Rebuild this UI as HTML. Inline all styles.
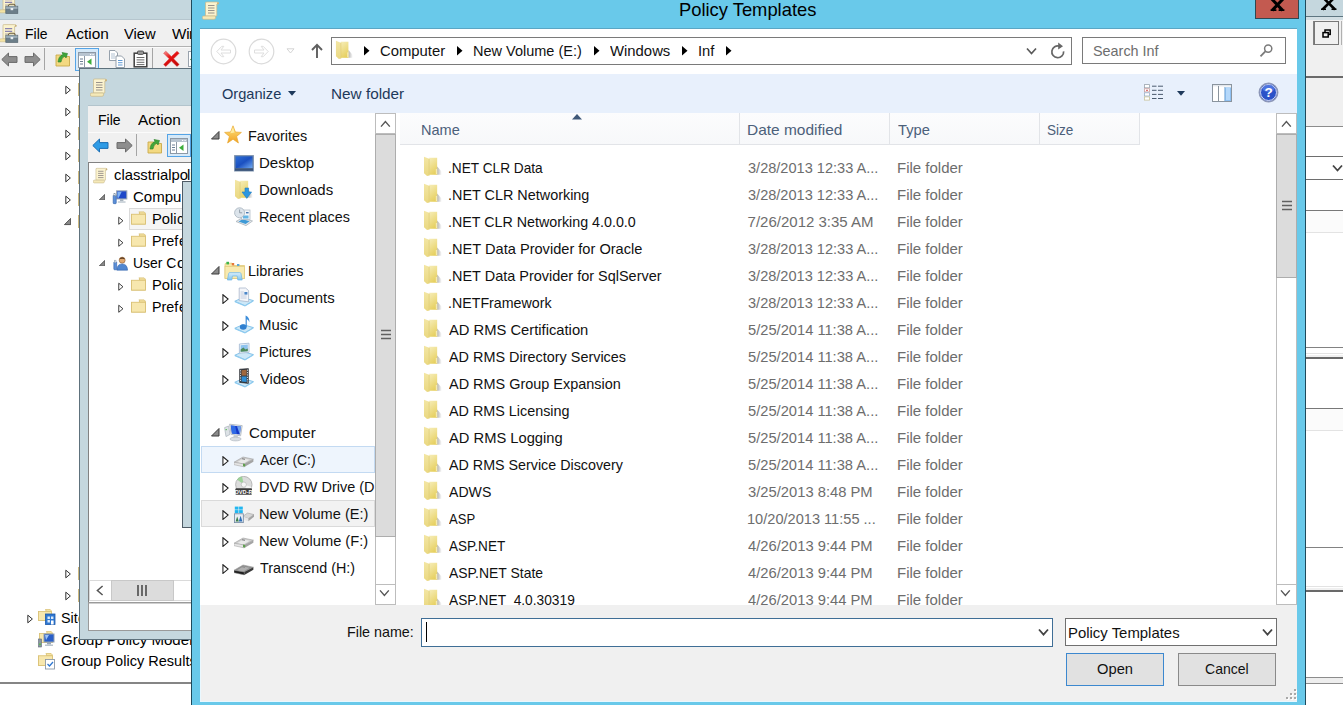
<!DOCTYPE html>
<html><head><meta charset="utf-8"><title>Policy Templates</title>
<style>
html,body{margin:0;padding:0;}
body{width:1343px;height:705px;overflow:hidden;background:#fff;position:relative;font-family:"Liberation Sans",sans-serif;font-size:15px;}
.layer{position:absolute;overflow:hidden;}
.a{position:absolute;display:block;}
.t{position:absolute;white-space:pre;line-height:20px;height:20px;transform-origin:0 0;}
</style></head><body>
<svg width="0" height="0" style="position:absolute">
<defs>
<linearGradient id="gFold" x1="0.2" y1="0" x2="0.6" y2="1"><stop offset="0" stop-color="#F5EBB2"/><stop offset="1" stop-color="#E6CF5E"/></linearGradient><linearGradient id="gShadow" x1="0" y1="0" x2="1" y2="0"><stop offset="0" stop-color="#000" stop-opacity="0.3"/><stop offset="1" stop-color="#000" stop-opacity="0"/></linearGradient>
<linearGradient id="gFold2" x1="0" y1="0" x2="0" y2="1"><stop offset="0" stop-color="#F3E6A4"/><stop offset="1" stop-color="#EAD881"/></linearGradient>
<linearGradient id="gBlue" x1="0" y1="0" x2="1" y2="1"><stop offset="0" stop-color="#2F6FD6"/><stop offset="0.5" stop-color="#1B50C0"/><stop offset="1" stop-color="#6FA8F0"/></linearGradient>
<linearGradient id="gStar" x1="0" y1="0" x2="0" y2="1"><stop offset="0" stop-color="#FFE680"/><stop offset="1" stop-color="#F0A020"/></linearGradient>
<linearGradient id="gLib" x1="0" y1="0" x2="0" y2="1"><stop offset="0" stop-color="#D8EEFB"/><stop offset="1" stop-color="#7FC4EE"/></linearGradient>
<linearGradient id="gDrv" x1="0" y1="0" x2="0" y2="1"><stop offset="0" stop-color="#F4F4F4"/><stop offset="1" stop-color="#A9A9A9"/></linearGradient>
<symbol id="folder" viewBox="0 0 20 22">
 <path d="M14.9 11 L19.8 16.5 L19.8 19.6 L14.9 19.7 Z" fill="url(#gShadow)"/>
 <path d="M6.5 1.8 L14.9 1.8 L14.9 19.7 L6.5 19.7 Z" fill="url(#gFold)"/>
 <rect x="13.5" y="13.6" width="1.4" height="5.4" fill="#F5EAB2"/>
 <path d="M1.05 0.75 L6.5 2.95 L6.5 20.5 L4.3 21 L1.05 18 Z" fill="url(#gFold2)"/>
 <path d="M6.5 2.95 L6.5 20.5" stroke="#DDC868" stroke-width="0.7"/>
</symbol>
<symbol id="tri" viewBox="0 0 8 11"><path d="M1 0.8 L6.6 5.5 L1 10.2 Z" fill="#fff" stroke="#222" stroke-width="1.15"/></symbol>
<symbol id="triX" viewBox="0 0 9 9"><path d="M8 0.5 L8 8 L0.5 8 Z" fill="#8A8A8A" stroke="#3C3C3C" stroke-width="1"/></symbol>
<symbol id="scroll" viewBox="0 0 19 19">
 <path d="M3.5 2 Q3 1 5 1 L15 1 Q17 1 16.5 3 L14.8 3.2 L14.8 15 L3.5 15 Z" fill="#FBF3CF" stroke="#C9B98A" stroke-width="0.7"/>
 <path d="M14.8 3.2 L16.8 3 Q17.4 1.4 15.6 1" fill="#C8B079"/>
 <path d="M6 4.5h6.5M6 7h6.5M6 9.5h6.5M6 12h6.5" stroke="#9A938C" stroke-width="1.1"/>
 <path d="M1 15 L12.5 15 Q14 15 13.6 17 Q13.4 18.3 12 18.3 L1.6 18.3 Q0.2 18.3 0.4 16.6 Q0.5 15.2 1 15Z" fill="#F5E9B8" stroke="#C9B98A" stroke-width="0.7"/>
</symbol>
<symbol id="sfolder" viewBox="0 0 16 14">
 <path d="M0.5 3 L0.5 13.5 L15.5 13.5 L15.5 3 L9 3 L9 1 Q9 0.5 8.4 0.5 L9 0.5 L14 0.5 L15 1.5 L15.5 3" fill="#F5E3A3" stroke="#D9C074" stroke-width="0.9"/>
 <rect x="0.5" y="3" width="15" height="10.5" fill="#F7E7AE" stroke="#D9C074" stroke-width="0.9"/>
</symbol>
</defs></svg>
<div class="layer" id="main" style="left:0;top:0;width:1343px;height:705px;"><div class="a" style="left:0px;top:0px;width:1343px;height:705px;background:#fff;"></div>
<div class="a" style="left:0px;top:0px;width:1343px;height:19px;background:#C5D7DE;"></div>
<div class="a" style="left:0px;top:19px;width:1343px;height:1px;background:#B6C6CE;"></div>
<div class="a" style="left:0px;top:20px;width:1343px;height:57px;background:#F0F0F0;"></div>
<div class="a" style="left:0px;top:46px;width:200px;height:1px;background:#B2B2B2;"></div>
<div class="a" style="left:0px;top:47px;width:200px;height:1px;background:#FBFBFB;"></div>
<div class="a" style="left:0px;top:76px;width:1343px;height:1px;background:#8E8E8E;"></div>
<div class="a" style="left:1306px;top:16px;width:37px;height:1px;background:#5E7681;"></div>
<div class="a" style="left:1306px;top:17px;width:37px;height:3px;background:#D3DFE4;"></div>
<div class="a" style="left:1306px;top:76px;width:37px;height:2px;background:#6A6A6A;"></div>
<div class="a" style="left:1306px;top:78px;width:37px;height:48px;background:#F0F0F0;"></div>
<div class="a" style="left:1306px;top:126px;width:37px;height:1px;background:#8C8C8C;"></div>
<div class="a" style="left:1306px;top:156px;width:37px;height:1px;background:#6E6E6E;"></div>
<div class="a" style="left:1306px;top:179px;width:37px;height:1px;background:#6E6E6E;"></div>
<div class="a" style="left:1306px;top:210px;width:37px;height:1px;background:#787878;"></div>
<div class="a" style="left:1306px;top:232px;width:37px;height:1px;background:#E3E3E3;"></div>
<div class="a" style="left:1306px;top:347px;width:37px;height:1px;background:#828282;"></div>
<div class="a" style="left:1306px;top:353px;width:37px;height:1px;background:#E3E3E3;"></div>
<div class="a" style="left:1306px;top:408px;width:37px;height:1px;background:#787878;"></div>
<div class="a" style="left:1306px;top:430px;width:37px;height:1px;background:#E3E3E3;"></div>
<div class="a" style="left:1306px;top:547px;width:37px;height:1px;background:#828282;"></div>
<div class="a" style="left:1306px;top:586px;width:37px;height:1px;background:#E3E3E3;"></div>
<div class="a" style="left:1306px;top:677px;width:37px;height:1px;background:#8C8C8C;"></div>
<div class="a" style="left:1306px;top:683px;width:37px;height:1px;background:#8C8C8C;"></div>
<div class="a" style="left:1306px;top:211px;width:37px;height:21px;background:#FBFBFB;"></div>
<div class="a" style="left:1306px;top:409px;width:37px;height:21px;background:#FBFBFB;"></div>
<div class="a" style="left:1306px;top:355px;width:37px;height:2px;background:#F0F0F0;"></div>
<div class="a" style="left:1306px;top:357px;width:37px;height:2px;background:#696969;"></div>
<div class="a" style="left:1306px;top:588px;width:37px;height:2px;background:#F0F0F0;"></div>
<div class="a" style="left:1306px;top:590px;width:37px;height:2px;background:#696969;"></div>
<div class="a" style="left:1306px;top:678px;width:37px;height:5px;background:#EEEEEE;"></div>
<svg class="a" style="left:1320px;top:0px;" width="18" height="11" viewBox="0 0 18 11"><path d="M2.5 -3 L15 9.5 M15 -3 L2.5 9.5" stroke="#000" stroke-width="2.6"/><path d="M1 9.3h5M11.5 9.3h5" stroke="#000" stroke-width="1.6"/></svg>
<div class="a" style="left:1306px;top:21px;width:8px;height:24px;background:#F0F0F0;border:none;box-sizing:border-box;border-right:1px solid #808080;"></div>
<div class="a" style="left:1314px;top:21px;width:25px;height:24px;background:#F0F0F0;border:1px solid #777;box-sizing:border-box;"></div>
<svg class="a" style="left:1321.5px;top:28.5px;" width="9" height="9" viewBox="0 0 9 9"><rect x="3" y="1" width="5.2" height="4.4" fill="none" stroke="#000" stroke-width="1.5"/><rect x="1" y="3.6" width="5.2" height="4.4" fill="#F0F0F0" stroke="#000" stroke-width="1.5"/></svg>
<div class="a" style="left:1341px;top:21px;width:2px;height:24px;background:#F0F0F0;border:none;box-sizing:border-box;border-left:1px solid #B0B0B0;"></div>
<svg class="a" style="left:1332px;top:164px;" width="11" height="9" viewBox="0 0 11 9"><path d="M1 1.5 L5.5 6.5 L10 1.5" fill="none" stroke="#444" stroke-width="1.8"/></svg>
<div class="a" style="left:0px;top:682px;width:191px;height:2px;background:#858585;"></div>
<svg class="a" style="left:0px;top:-5px;" width="19" height="20" viewBox="0 0 19 20"><path d="M3 1.5 Q2.6 0.6 4.2 0.6 L14.6 0.6 Q16.6 0.6 16 2.4 L14.6 2.6 L14.6 15 L3 15Z" fill="#FBF3CF" stroke="#C9B98A" stroke-width="0.7"/><path d="M14.6 2.6 L16.6 2.4 Q17.2 1 15.4 0.6" fill="#C8B079"/><path d="M5 4.6h7.2M5 7.4h7.2" stroke="#8A84B0" stroke-width="1.4"/><path d="M5 10h3" stroke="#B0A8A0" stroke-width="1"/><rect x="-0.5" y="14.8" width="6.8" height="3" rx="1.2" fill="#F3E3A3" stroke="#C9B98A" stroke-width="0.6"/><rect x="5.8" y="11.2" width="12" height="7.2" fill="#6C7E89" stroke="#55656F" stroke-width="0.7"/><rect x="6.1" y="11.5" width="11.4" height="2.4" fill="#9CADB8"/><rect x="10.6" y="13" width="2.6" height="2.2" fill="#E8EEF2"/><path d="M8.4 11.2 Q8.4 9.2 10 9.2 L13.6 9.2 Q15.2 9.2 15.2 11.2" fill="none" stroke="#6A5A3A" stroke-width="1.1"/></svg>
<svg class="a" style="left:0px;top:24px;" width="19" height="20" viewBox="0 0 19 20"><path d="M3 1.5 Q2.6 0.6 4.2 0.6 L14.6 0.6 Q16.6 0.6 16 2.4 L14.6 2.6 L14.6 15 L3 15Z" fill="#FBF3CF" stroke="#C9B98A" stroke-width="0.7"/><path d="M14.6 2.6 L16.6 2.4 Q17.2 1 15.4 0.6" fill="#C8B079"/><path d="M5 4.6h7.2M5 7.4h7.2" stroke="#8A84B0" stroke-width="1.4"/><path d="M5 10h3" stroke="#B0A8A0" stroke-width="1"/><rect x="-0.5" y="14.8" width="6.8" height="3" rx="1.2" fill="#F3E3A3" stroke="#C9B98A" stroke-width="0.6"/><rect x="5.8" y="11.2" width="12" height="7.2" fill="#6C7E89" stroke="#55656F" stroke-width="0.7"/><rect x="6.1" y="11.5" width="11.4" height="2.4" fill="#9CADB8"/><rect x="10.6" y="13" width="2.6" height="2.2" fill="#E8EEF2"/><path d="M8.4 11.2 Q8.4 9.2 10 9.2 L13.6 9.2 Q15.2 9.2 15.2 11.2" fill="none" stroke="#6A5A3A" stroke-width="1.1"/></svg>
<svg class="a" style="left:1px;top:52px;" width="17" height="15" viewBox="0 0 17 15"><path d="M0.8 7.5 L7.5 1 L7.5 4.6 L16 4.6 L16 10.4 L7.5 10.4 L7.5 14 Z" fill="#8E8E8E" stroke="#6B6B6B" stroke-width="1"/></svg>
<svg class="a" style="left:24px;top:52px;" width="17" height="15" viewBox="0 0 17 15"><path d="M16.2 7.5 L9.5 1 L9.5 4.6 L1 4.6 L1 10.4 L9.5 10.4 L9.5 14 Z" fill="#8E8E8E" stroke="#6B6B6B" stroke-width="1"/></svg>
<div class="a" style="left:44px;top:48px;width:1px;height:22px;background:#A5A5A5;"></div>
<svg class="a" style="left:55px;top:51px;" width="16" height="16" viewBox="0 0 16 16"><path d="M1 5.5 L1 15 L14.5 15 L14.5 5.5 L8 5.5 L6.5 4 L1 4 Z" fill="#F3D981" stroke="#C9A94A" stroke-width="0.9"/><path d="M3 11 Q3.5 5 8 3.5 L7 1.5 L12.5 2.5 L11 7 L9.8 5.2 Q6.5 6.5 6 11 Z" fill="#3FA53A" stroke="#2B7F28" stroke-width="0.6"/></svg>
<div class="a" style="left:75px;top:48px;width:24px;height:23px;background:#D6E9F8;border:1px solid #55A4E6;box-sizing:border-box;"></div>
<svg class="a" style="left:78px;top:52px;" width="18" height="16" viewBox="0 0 18 16"><rect x="0.5" y="0.5" width="17" height="15" fill="#fff" stroke="#8D99A6"/><rect x="1" y="1" width="16" height="3" fill="#B8C4D0"/><path d="M12 2.5h1.2M14.5 2.5h1.2" stroke="#fff" stroke-width="1.2"/><path d="M6.5 4v11.5" stroke="#8D99A6"/><path d="M2 7h3M2 9.5h3M2 12h3" stroke="#6C7F94" stroke-width="1.1"/><path d="M13.5 6.5 L13.5 13 L9 9.75 Z" fill="#3DAE3B"/></svg>
<svg class="a" style="left:108px;top:50px;" width="18" height="18" viewBox="0 0 18 18"><path d="M1.5 0.5 L7 0.5 L9.5 3 L9.5 10.5 L1.5 10.5 Z" fill="#fff" stroke="#8A96A3" stroke-width="0.9"/><path d="M3 4h4M3 6h4M3 8h4" stroke="#9FB2C6" stroke-width="0.8"/><path d="M8 6 L13.5 6 L16.5 9 L16.5 17.5 L8 17.5 Z" fill="#fff" stroke="#8A96A3" stroke-width="0.9"/><path d="M10 10.5h4.5M10 12.7h4.5M10 15h4.5" stroke="#4F8FD0" stroke-width="0.9"/></svg>
<svg class="a" style="left:133px;top:50px;" width="15" height="18" viewBox="0 0 15 18"><rect x="1.2" y="3.2" width="12.6" height="13.6" fill="#fff" stroke="#3E3E3E" stroke-width="1.5"/><rect x="4.5" y="1" width="6" height="3.4" rx="1" fill="#9A9A9A" stroke="#3A3A3A" stroke-width="0.8"/><path d="M3.6 7.5h7.8M3.6 9.9h7.8M3.6 12.3h7.8M3.6 14.6h7.8" stroke="#6A6A6A" stroke-width="1"/></svg>
<div class="a" style="left:152px;top:48px;width:1px;height:22px;background:#A5A5A5;"></div>
<svg class="a" style="left:162px;top:50px;" width="19" height="18" viewBox="0 0 19 18"><defs><linearGradient id="gX" x1="0" y1="0" x2="0.6" y2="1"><stop offset="0" stop-color="#F59A9A"/><stop offset="0.45" stop-color="#E81414"/><stop offset="1" stop-color="#C40808"/></linearGradient></defs><path d="M1.6 3.2 L3.8 1.2 L9.4 6.6 L15 1.2 L17.2 3.2 L11.6 8.8 L17.2 14.4 L15 16.4 L9.4 11 L3.8 16.4 L1.6 14.4 L7.2 8.8 Z" fill="url(#gX)" stroke="#D84040" stroke-width="0.5"/></svg>
<svg class="a" style="left:188px;top:51px;" width="8" height="16" viewBox="0 0 8 16"><rect x="0.5" y="0.5" width="10" height="15" fill="#fff" stroke="#9AA3AD"/><path d="M2 8.5 l3 2.5 l0 -5z" fill="#2E8B34"/></svg>
<svg class="a" style="left:64.5px;top:85px;" width="6.5" height="10" viewBox="0 0 6.5 10"><use href="#tri" width="6.5" height="10"/></svg>
<div class="a" style="left:77.5px;top:83px;width:2px;height:13px;background:#CDB87E;"></div>
<svg class="a" style="left:64.5px;top:107px;" width="6.5" height="10" viewBox="0 0 6.5 10"><use href="#tri" width="6.5" height="10"/></svg>
<div class="a" style="left:77.5px;top:105px;width:2px;height:13px;background:#CDB87E;"></div>
<svg class="a" style="left:64.5px;top:129px;" width="6.5" height="10" viewBox="0 0 6.5 10"><use href="#tri" width="6.5" height="10"/></svg>
<div class="a" style="left:77.5px;top:127px;width:2px;height:13px;background:#CDB87E;"></div>
<svg class="a" style="left:64.5px;top:151px;" width="6.5" height="10" viewBox="0 0 6.5 10"><use href="#tri" width="6.5" height="10"/></svg>
<div class="a" style="left:77.5px;top:149px;width:2px;height:13px;background:#CDB87E;"></div>
<svg class="a" style="left:64.5px;top:173px;" width="6.5" height="10" viewBox="0 0 6.5 10"><use href="#tri" width="6.5" height="10"/></svg>
<div class="a" style="left:77.5px;top:171px;width:2px;height:13px;background:#CDB87E;"></div>
<svg class="a" style="left:64.5px;top:195px;" width="6.5" height="10" viewBox="0 0 6.5 10"><use href="#tri" width="6.5" height="10"/></svg>
<div class="a" style="left:77.5px;top:193px;width:2px;height:13px;background:#CDB87E;"></div>
<svg class="a" style="left:64.5px;top:569px;" width="6.5" height="10" viewBox="0 0 6.5 10"><use href="#tri" width="6.5" height="10"/></svg>
<div class="a" style="left:77.5px;top:567px;width:2px;height:13px;background:#CDB87E;"></div>
<svg class="a" style="left:64.5px;top:591px;" width="6.5" height="10" viewBox="0 0 6.5 10"><use href="#tri" width="6.5" height="10"/></svg>
<div class="a" style="left:77.5px;top:589px;width:2px;height:13px;background:#CDB87E;"></div>
<svg class="a" style="left:63.5px;top:218px;" width="7.5" height="7.5" viewBox="0 0 7.5 7.5"><use href="#triX" width="7.5" height="7.5"/></svg>
<div class="a" style="left:77.5px;top:215px;width:2px;height:13px;background:#CDB87E;"></div>
<svg class="a" style="left:26.5px;top:613.5px;" width="6.5" height="10" viewBox="0 0 6.5 10"><use href="#tri" width="6.5" height="10"/></svg>
<svg class="a" style="left:38px;top:609px;" width="18" height="16" viewBox="0 0 18 16"><use href="#sfolder" x="0" y="0" width="14" height="12"/><rect x="7.5" y="5" width="9.5" height="10.5" fill="#2F78D2" stroke="#1C58A8" stroke-width="0.8"/><path d="M9.5 7.5h2.4v2.4h-2.4zM13 7.5h2.4v2.4h-2.4zM9.5 11h2.4v2.4h-2.4z" fill="#DDEBFA"/><rect x="13" y="11.5" width="2.6" height="4" fill="#fff"/></svg>
<svg class="a" style="left:38px;top:631px;" width="18" height="17" viewBox="0 0 18 17"><use href="#sfolder" x="1" y="0" width="14" height="12"/><rect x="6" y="3" width="10" height="8" fill="#2A5FC8" stroke="#8FA0B4" stroke-width="1"/><path d="M7 4 l4 0 l-3 5z" fill="#9DC3F5"/><rect x="9" y="11" width="4" height="2.5" fill="#9AA7B4"/><rect x="7" y="13.5" width="8" height="1.5" fill="#B9C4CE"/><rect x="0.5" y="8" width="3" height="8" fill="#8B97A3" stroke="#5E6A75" stroke-width="0.6"/><rect x="1.2" y="12.5" width="1.6" height="1.6" fill="#54C03F"/></svg>
<svg class="a" style="left:38px;top:653px;" width="18" height="17" viewBox="0 0 18 17"><use href="#sfolder" x="0" y="0" width="15" height="13"/><rect x="7.5" y="6.5" width="9" height="9.5" fill="#fff" stroke="#8D99A6" stroke-width="0.9"/><path d="M9.5 11 l2 2 l3.5 -4" fill="none" stroke="#2F78D2" stroke-width="1.3"/></svg>
<span class="t" style="left:25.1px;top:23.5px;font-size:15px;color:#000;transform:scaleX(0.9315);">File</span>
<span class="t" style="left:65.5px;top:23.5px;font-size:15px;color:#000;transform:scaleX(1.0252);">Action</span>
<span class="t" style="left:124.3px;top:23.5px;font-size:15px;color:#000;transform:scaleX(0.9848);">View</span>
<span class="t" style="left:172.0px;top:23.5px;font-size:15px;color:#000;transform:scaleX(1.0123);">Wi</span>
<span class="t" style="left:188.8px;top:23.5px;font-size:15px;color:#000;transform:scaleX(1.0335);">ndow</span>
<span class="t" style="left:60.8px;top:607.5px;font-size:15px;color:#000;transform:scaleX(0.9559);">Sit</span>
<span class="t" style="left:77.6px;top:607.5px;font-size:15px;color:#000;transform:scaleX(0.9004);">es</span>
<span class="t" style="left:60.8px;top:629.5px;font-size:15px;color:#000;transform:scaleX(1.0045);">Group Policy Model</span>
<span class="t" style="left:191.3px;top:629.5px;font-size:15px;color:#000;transform:scaleX(1.0488);">ing</span>
<span class="t" style="left:60.8px;top:651.4px;font-size:15px;color:#000;transform:scaleX(0.9688);">Group Policy Results</span></div>
<div class="layer" id="inner" style="left:0;top:0;width:1343px;height:705px;"><div class="a" style="left:79px;top:68px;width:130px;height:572px;background:#C5D7DE;border:1px solid #5E717C;box-sizing:border-box;"></div>
<div class="a" style="left:88px;top:106px;width:120px;height:56px;background:#F0F0F0;"></div>
<div class="a" style="left:88px;top:132px;width:120px;height:1px;background:#FBFBFB;"></div>
<div class="a" style="left:88px;top:105px;width:120px;height:1px;background:#B3C4CC;"></div>
<svg class="a" style="left:90px;top:78px;" width="19" height="19" viewBox="0 0 19 19"><use href="#scroll" width="19" height="19"/></svg>
<svg class="a" style="left:92px;top:138px;" width="17" height="15" viewBox="0 0 17 15"><path d="M0.8 7.5 L7.5 1 L7.5 4.6 L16 4.6 L16 10.4 L7.5 10.4 L7.5 14 Z" fill="#2E9BE6" stroke="#1C6FB5" stroke-width="1"/></svg>
<svg class="a" style="left:115.5px;top:138px;" width="17" height="15" viewBox="0 0 17 15"><path d="M16.2 7.5 L9.5 1 L9.5 4.6 L1 4.6 L1 10.4 L9.5 10.4 L9.5 14 Z" fill="#8E8E8E" stroke="#6B6B6B" stroke-width="1"/></svg>
<div class="a" style="left:136px;top:134px;width:1px;height:22px;background:#A5A5A5;"></div>
<svg class="a" style="left:147px;top:138px;" width="16" height="16" viewBox="0 0 16 16"><path d="M1 5.5 L1 15 L14.5 15 L14.5 5.5 L8 5.5 L6.5 4 L1 4 Z" fill="#F3D981" stroke="#C9A94A" stroke-width="0.9"/><path d="M3 11 Q3.5 5 8 3.5 L7 1.5 L12.5 2.5 L11 7 L9.8 5.2 Q6.5 6.5 6 11 Z" fill="#3FA53A" stroke="#2B7F28" stroke-width="0.6"/></svg>
<div class="a" style="left:166.5px;top:134px;width:24px;height:23px;background:#D6E9F8;border:1px solid #55A4E6;box-sizing:border-box;"></div>
<svg class="a" style="left:169.5px;top:138px;" width="18" height="16" viewBox="0 0 18 16"><rect x="0.5" y="0.5" width="17" height="15" fill="#fff" stroke="#8D99A6"/><rect x="1" y="1" width="16" height="3" fill="#B8C4D0"/><path d="M12 2.5h1.2M14.5 2.5h1.2" stroke="#fff" stroke-width="1.2"/><path d="M6.5 4v11.5" stroke="#8D99A6"/><path d="M2 7h3M2 9.5h3M2 12h3" stroke="#6C7F94" stroke-width="1.1"/><path d="M13.5 6.5 L13.5 13 L9 9.75 Z" fill="#3DAE3B"/></svg>
<div class="a" style="left:88px;top:162px;width:120px;height:441px;background:#fff;border:1px solid #828282;box-sizing:border-box;"></div>
<div class="a" style="left:88px;top:603px;width:120px;height:28px;background:#fff;border:1px solid #9A9A9A;box-sizing:border-box;border-top:none;border-right:none;"></div>
<div class="a" style="left:88px;top:602px;width:120px;height:1px;background:#9A9A9A;"></div>
<div class="a" style="left:89px;top:603px;width:120px;height:1px;background:#CFCFCF;"></div>
<div class="a" style="left:89px;top:580px;width:118px;height:21px;background:#fff;border:1px solid #DADADA;box-sizing:border-box;"></div>
<div class="a" style="left:111px;top:580px;width:63px;height:21px;background:#DCDCDC;border:1px solid #C8C8C8;box-sizing:border-box;"></div>
<svg class="a" style="left:96px;top:585px;" width="8" height="11" viewBox="0 0 8 11"><path d="M6.6 1 L1.4 5.5 L6.6 10" fill="none" stroke="#555" stroke-width="1.5"/></svg>
<svg class="a" style="left:136px;top:584px;" width="12" height="13" viewBox="0 0 12 13"><path d="M2 1v11M6 1v11M10 1v11" stroke="#555" stroke-width="1.7"/></svg>
<svg class="a" style="left:93px;top:167px;" width="16" height="17" viewBox="0 0 16 17"><use href="#scroll" width="16" height="17"/></svg>
<svg class="a" style="left:98.6px;top:193.6px;" width="6.6" height="6.6" viewBox="0 0 6.6 6.6"><use href="#triX" width="6.6" height="6.6"/></svg>
<svg class="a" style="left:112px;top:190px;" width="16" height="14.5" viewBox="0 0 18 17"><rect x="5" y="1" width="12" height="9.5" fill="#1E48C8" stroke="#9AA7B4" stroke-width="1.2"/><path d="M6 2 l5 0 l-3.5 7 l-1.5 0z" fill="#7FB2F5"/><rect x="9" y="10.8" width="4" height="2.4" fill="#A8B3BD"/><rect x="6.5" y="13.2" width="9" height="1.8" fill="#C3CCD4"/><rect x="1" y="6" width="3.6" height="10" rx="0.8" fill="#5B8FD8" stroke="#2E5FA8" stroke-width="0.7"/><rect x="1.8" y="4" width="2" height="3" fill="#DDE6F0" stroke="#8A96A3" stroke-width="0.5"/></svg>
<div class="a" style="left:129px;top:208px;width:80px;height:22px;background:#F5F5F5;border:1px solid #DADADA;box-sizing:border-box;"></div>
<svg class="a" style="left:118.3px;top:215.5px;" width="6" height="9.5" viewBox="0 0 6 9.5"><use href="#tri" width="6" height="9.5"/></svg>
<svg class="a" style="left:130.5px;top:211px;" width="15" height="14" viewBox="0 0 15 14"><use href="#sfolder" width="15" height="14"/></svg>
<svg class="a" style="left:118.3px;top:237.5px;" width="6" height="9.5" viewBox="0 0 6 9.5"><use href="#tri" width="6" height="9.5"/></svg>
<svg class="a" style="left:130.5px;top:233px;" width="15" height="14" viewBox="0 0 15 14"><use href="#sfolder" width="15" height="14"/></svg>
<svg class="a" style="left:118.3px;top:281.5px;" width="6" height="9.5" viewBox="0 0 6 9.5"><use href="#tri" width="6" height="9.5"/></svg>
<svg class="a" style="left:130.5px;top:277px;" width="15" height="14" viewBox="0 0 15 14"><use href="#sfolder" width="15" height="14"/></svg>
<svg class="a" style="left:118.3px;top:303.5px;" width="6" height="9.5" viewBox="0 0 6 9.5"><use href="#tri" width="6" height="9.5"/></svg>
<svg class="a" style="left:130.5px;top:299px;" width="15" height="14" viewBox="0 0 15 14"><use href="#sfolder" width="15" height="14"/></svg>
<svg class="a" style="left:98.6px;top:259.6px;" width="6.6" height="6.6" viewBox="0 0 6.6 6.6"><use href="#triX" width="6.6" height="6.6"/></svg>
<svg class="a" style="left:112.5px;top:256px;" width="15" height="15" viewBox="0 0 18 18"><circle cx="11" cy="5" r="3.6" fill="#E0A870" stroke="#8A5A30" stroke-width="0.7"/><path d="M7.5 4 Q11 -1 14.6 4 Q11 2.6 7.5 4Z" fill="#5A3A1E"/><path d="M4.5 17 Q5 9.5 11 9.5 Q17 9.5 17.5 17 Z" fill="#4F86D0" stroke="#2E5FA8" stroke-width="0.7"/><rect x="1" y="7" width="3.4" height="9.5" rx="0.8" fill="#5B8FD8" stroke="#2E5FA8" stroke-width="0.7"/><rect x="1.8" y="5" width="1.8" height="3" fill="#DDE6F0" stroke="#8A96A3" stroke-width="0.5"/></svg>
<span class="t" style="left:97.7px;top:109.5px;font-size:15px;color:#000;transform:scaleX(0.9315);">File</span>
<span class="t" style="left:137.7px;top:109.5px;font-size:15px;color:#000;transform:scaleX(1.0252);">Action</span>
<span class="t" style="left:113.8px;top:165.2px;font-size:15px;color:#000;transform:scaleX(0.9865);">classtrialpo</span>
<span class="t" style="left:186.9px;top:165.2px;font-size:15px;color:#000;transform:scaleX(0.9925);">licy</span>
<span class="t" style="left:133.2px;top:187.2px;font-size:15px;color:#000;transform:scaleX(1.0022);">Compu</span>
<span class="t" style="left:181.8px;top:187.2px;font-size:15px;color:#000;transform:scaleX(1.0252);">ter Configuration</span>
<span class="t" style="left:151.6px;top:209.2px;font-size:15px;color:#000;transform:scaleX(0.9815);">Poli</span>
<span class="t" style="left:177.3px;top:209.2px;font-size:15px;color:#000;transform:scaleX(0.9319);">cies</span>
<span class="t" style="left:151.6px;top:231.2px;font-size:15px;color:#000;transform:scaleX(0.9543);">Pref</span>
<span class="t" style="left:179.0px;top:231.2px;font-size:15px;color:#000;transform:scaleX(0.9502);">erences</span>
<span class="t" style="left:133.1px;top:253.2px;font-size:15px;color:#000;transform:scaleX(0.9277);">User C</span>
<span class="t" style="left:177.4px;top:253.2px;font-size:15px;color:#000;transform:scaleX(1.0463);">onfiguration</span>
<span class="t" style="left:151.6px;top:275.2px;font-size:15px;color:#000;transform:scaleX(0.9815);">Poli</span>
<span class="t" style="left:177.3px;top:275.2px;font-size:15px;color:#000;transform:scaleX(0.9319);">cies</span>
<span class="t" style="left:151.6px;top:297.2px;font-size:15px;color:#000;transform:scaleX(0.9543);">Pref</span>
<span class="t" style="left:179.0px;top:297.2px;font-size:15px;color:#000;transform:scaleX(0.9502);">erences</span></div>
<div class="layer" id="strip" style="left:0;top:0;width:1343px;height:705px;"><div class="a" style="left:182px;top:181px;width:12px;height:347px;background:#C5D7DE;border:1px solid #4F5C66;box-sizing:border-box;"></div></div>
<div class="layer" id="dialog" style="left:0;top:0;width:1343px;height:705px;"><div class="a" style="left:191px;top:-2px;width:1115px;height:720px;background:#69C9EA;border:1px solid #1E4A5C;box-sizing:border-box;"></div>
<div class="a" style="left:200px;top:28px;width:1097px;height:1px;background:#5BA6C4;"></div>
<div class="a" style="left:200px;top:29px;width:1097px;height:673px;background:#fff;"></div>
<svg class="a" style="left:202px;top:1px;" width="19" height="19" viewBox="0 0 19 19"><use href="#scroll" width="19" height="19"/></svg>
<div class="a" style="left:1255px;top:-1px;width:44px;height:20px;background:#C35A50;border:1px solid #2F4852;box-sizing:border-box;"></div>
<svg class="a" style="left:1268px;top:0px;" width="19" height="12" viewBox="0 0 19 12"><path d="M-0.6 -5.7 L14.6 10.4 M19.4 -5.7 L4.2 10.4" stroke="#000" stroke-width="3"/><path d="M2.6 10.2h5.8M10.6 10.2h5.8" stroke="#000" stroke-width="1.7"/></svg>
<svg class="a" style="left:210px;top:38px;" width="27" height="27" viewBox="0 0 27 27"><circle cx="13.5" cy="13.5" r="12.3" fill="#fff" stroke="#DADADA" stroke-width="1.2"/><path d="M20.5 12 L11 12 L13.8 8.3 L11.8 8.3 L6.8 13.5 L11.8 18.7 L13.8 18.7 L11 15 L20.5 15 Z" fill="#fff" stroke="#DEDEDE" stroke-width="1"/></svg>
<svg class="a" style="left:248px;top:38px;" width="27" height="27" viewBox="0 0 27 27"><circle cx="13.5" cy="13.5" r="12.3" fill="#fff" stroke="#DADADA" stroke-width="1.2"/><path d="M6.5 12 L16 12 L13.2 8.3 L15.2 8.3 L20.2 13.5 L15.2 18.7 L13.2 18.7 L16 15 L6.5 15 Z" fill="#fff" stroke="#DEDEDE" stroke-width="1"/></svg>
<svg class="a" style="left:286px;top:48px;" width="9" height="6" viewBox="0 0 9 6"><path d="M1 0.8 L8 0.8 L4.5 5 Z" fill="#fff" stroke="#D0D0D0" stroke-width="0.9"/></svg>
<svg class="a" style="left:310px;top:43px;" width="14" height="16" viewBox="0 0 14 16"><path d="M7 2 L7 15 M2 7 L7 1.8 L12 7" fill="none" stroke="#5F5F5F" stroke-width="1.9"/></svg>
<div class="a" style="left:331px;top:37px;width:741px;height:28px;background:#fff;border:1px solid #7A7A7A;box-sizing:border-box;"></div>
<svg class="a" style="left:335px;top:39.5px;" width="18" height="20" viewBox="0 0 18 20"><use href="#folder" width="18" height="20"/></svg>
<svg class="a" style="left:363.7px;top:46px;" width="6" height="10" viewBox="0 0 6 10"><path d="M0 0 L5.5 4.7 L0 9.4 Z" fill="#000"/></svg>
<svg class="a" style="left:456.9px;top:46px;" width="6" height="10" viewBox="0 0 6 10"><path d="M0 0 L5.5 4.7 L0 9.4 Z" fill="#000"/></svg>
<svg class="a" style="left:594px;top:46px;" width="6" height="10" viewBox="0 0 6 10"><path d="M0 0 L5.5 4.7 L0 9.4 Z" fill="#000"/></svg>
<svg class="a" style="left:681.7px;top:46px;" width="6" height="10" viewBox="0 0 6 10"><path d="M0 0 L5.5 4.7 L0 9.4 Z" fill="#000"/></svg>
<svg class="a" style="left:725.9px;top:46px;" width="6" height="10" viewBox="0 0 6 10"><path d="M0 0 L5.5 4.7 L0 9.4 Z" fill="#000"/></svg>
<svg class="a" style="left:1026px;top:47px;" width="11" height="9" viewBox="0 0 11 9"><path d="M1 1.5 L5.5 6.5 L10 1.5" fill="none" stroke="#5A5A5A" stroke-width="1.7"/></svg>
<svg class="a" style="left:1050px;top:42px;" width="16" height="18" viewBox="0 0 16 18"><path d="M9.5 4.2 A5.9 5.9 0 1 0 13.6 9.3" fill="none" stroke="#666" stroke-width="1.7"/><path d="M8.2 0.6 L13 4.2 L8.2 7.6 Z" fill="#666"/></svg>
<div class="a" style="left:1082px;top:37px;width:204px;height:27px;background:#fff;border:1px solid #7A7A7A;box-sizing:border-box;"></div>
<svg class="a" style="left:1259px;top:43px;" width="15" height="15" viewBox="0 0 15 15"><circle cx="9.2" cy="5.6" r="3.6" fill="none" stroke="#7A7A7A" stroke-width="1.5"/><path d="M6.6 8.2 L1.5 13.3" stroke="#7A7A7A" stroke-width="1.8"/></svg>
<div class="a" style="left:200px;top:74px;width:1097px;height:39px;background:#E8F0FC;"></div>
<svg class="a" style="left:287.5px;top:90.5px;" width="8" height="5" viewBox="0 0 8 5"><path d="M0 0 L8 0 L4 4.8 Z" fill="#1E395B"/></svg>
<svg class="a" style="left:1144px;top:84px;" width="20" height="17" viewBox="0 0 20 17"><g fill="#fff" stroke-width="0.8"><rect x="0.5" y="0.6" width="5" height="3.2" stroke="#9AA3AD"/><rect x="0.5" y="4.7" width="5" height="3.2" stroke="#C9A0A0"/><rect x="0.5" y="8.8" width="5" height="3.2" stroke="#9AB0C8"/><rect x="0.5" y="12.9" width="5" height="3.2" stroke="#C8C49A"/></g><path d="M8 2.2h4.5M14 2.2h5M8 6.3h4.5M14 6.3h5M8 10.4h4.5M14 10.4h5M8 14.5h4.5M14 14.5h5" stroke="#4A5A6E" stroke-width="1"/><path d="M2 6.3h2" stroke="#D04040" stroke-width="0.9"/></svg>
<svg class="a" style="left:1176.5px;top:90.5px;" width="8" height="5" viewBox="0 0 8 5"><path d="M0 0 L8 0 L4 4.8 Z" fill="#1E395B"/></svg>
<svg class="a" style="left:1212px;top:84px;" width="20" height="18" viewBox="0 0 20 18"><rect x="0.5" y="0.5" width="19" height="17" fill="#fff" stroke="#8A949E"/><rect x="1" y="1" width="18" height="1.4" fill="#E3E7EC"/><path d="M6.5 2v15.5" stroke="#8A949E"/><rect x="13" y="3.4" width="6" height="13.6" fill="#8EC0F2"/><rect x="14" y="4" width="4" height="12" fill="#B5D8FA"/><path d="M12.8 3v14.5" stroke="#6E9FD0" stroke-width="0.8"/></svg>
<svg class="a" style="left:1258px;top:82px;" width="21" height="21" viewBox="0 0 21 21"><circle cx="10.5" cy="10.5" r="9.3" fill="#2344B8" stroke="#8E98B8" stroke-width="1.3"/><circle cx="10.5" cy="10.5" r="8" fill="#2B52C8" stroke="#fff" stroke-width="0.8"/><ellipse cx="10.5" cy="6.5" rx="6" ry="3.6" fill="#5B82E8" opacity="0.7"/><text x="10.5" y="15.3" text-anchor="middle" font-family="Liberation Sans, sans-serif" font-weight="bold" font-size="13.5" fill="#fff">?</text></svg>
<div class="a" style="left:201px;top:446px;width:174px;height:27px;background:#EEF5FD;border:1px solid #C3DAF2;box-sizing:border-box;"></div>
<div class="a" style="left:201px;top:500px;width:174px;height:27px;background:#F2F2F2;border:1px solid #DADADA;box-sizing:border-box;"></div>
<svg class="a" style="left:210.5px;top:130.5px;" width="9" height="9" viewBox="0 0 9 9"><use href="#triX" width="9" height="9"/></svg>
<svg class="a" style="left:224px;top:124.5px;" width="18" height="20" viewBox="0 0 18 20"><path d="M9 0.8 L11.4 7 L17.4 7.4 L12.6 11.4 L14.4 18 L9 14.2 L3.6 18 L5.4 11.4 L0.6 7.4 L6.6 7 Z" fill="url(#gStar)" stroke="#E8A830" stroke-width="0.7"/><path d="M9 2.5 L10.6 7.6 L6.2 8.2 Z" fill="#FFF3B0" opacity="0.8"/></svg>
<svg class="a" style="left:234px;top:155px;" width="20" height="17" viewBox="0 0 20 17"><rect x="0.6" y="0.6" width="18.8" height="15.4" fill="#5E7FA8" stroke="#7F93AE" stroke-width="1"/><rect x="1.6" y="1.4" width="16.8" height="11.6" fill="url(#gBlue)"/><rect x="1" y="13.4" width="18" height="2.4" fill="#3C5478"/></svg>
<svg class="a" style="left:234px;top:178.5px;" width="19" height="21" viewBox="0 0 19 21"><use href="#folder" x="0" y="0" width="19" height="21"/><path d="M11 9 L14.6 9 L14.6 13 L17.6 13 L12.8 19.4 L8 13 L11 13 Z" fill="#2C97E0" stroke="#1F7CC4" stroke-width="0.6"/></svg>
<svg class="a" style="left:233.5px;top:206.5px;" width="20" height="20" viewBox="0 0 20 20"><path d="M2 14.5 L8 11 L18.5 14 L12 18.6 Z" fill="#E4E8EC" stroke="#A9B2BA" stroke-width="0.8"/><path d="M4.5 14.6 L8.6 12.2 L15.6 14.2 L11.6 16.9 Z" fill="#3E9AD6"/><rect x="7.5" y="3" width="8.5" height="9.5" fill="#F3F6F9" stroke="#B4BEC8" stroke-width="0.8"/><path d="M9 8.5 L14.5 8.5 L14.5 11.5 L9 11.5Z" fill="#62B5E5"/><rect x="12" y="5" width="2.6" height="1.4" fill="#4B78B0"/><circle cx="5.6" cy="5.8" r="5" fill="#DCE4EB" stroke="#AEB9C3" stroke-width="0.9"/><path d="M5.6 2.5 L5.6 5.8 L8.2 5.8" fill="none" stroke="#8A97A4" stroke-width="0.9"/></svg>
<svg class="a" style="left:210.5px;top:265.5px;" width="9" height="9" viewBox="0 0 9 9"><use href="#triX" width="9" height="9"/></svg>
<svg class="a" style="left:223.5px;top:261px;" width="22" height="20" viewBox="0 0 22 20"><path d="M1 3.5 L1 17.5 L20.5 17.5 L20.5 4.5 L9.5 4.5 L8 2.2 L2 2.2 Q1 2.2 1 3.5Z" fill="#F6E6A6" stroke="#E0C878" stroke-width="0.8"/><rect x="2.4" y="0.8" width="2.6" height="2.6" fill="#3DB54A"/><rect x="7.8" y="2" width="2.4" height="2.4" fill="#E8783A"/><rect x="13" y="3" width="2.4" height="2.2" fill="#5AA7D8"/><rect x="1" y="5.5" width="19.5" height="12" fill="#F8EAB0" stroke="#E3CC80" stroke-width="0.8"/><path d="M3.4 19 L4.6 12.6 Q4.8 11.6 5.8 11.6 L15.8 11.6 Q16.8 11.6 17 12.6 L18.2 19 L13.8 19 L13.2 15 L8.4 15 L7.8 19 Z" fill="url(#gLib)" stroke="#6FB5E2" stroke-width="0.7"/></svg>
<svg class="a" style="left:222.3px;top:293.8px;" width="7.4" height="10.2" viewBox="0 0 7.4 10.2"><use href="#tri" width="7.4" height="10.2"/></svg>
<svg class="a" style="left:234px;top:286.5px;" width="21" height="21" viewBox="0 0 21 21"><path d="M0.8 14.2 L9 10.6 L19.4 13.6 L11 18.6 Z" fill="#CDE8F8" stroke="#7FBFE8" stroke-width="0.9"/><path d="M0.8 14.2 L11 18.6 L19.4 13.6 L19.4 14.6 L11 19.6 L0.8 15.2Z" fill="#8CCBF0"/><path d="M5.2 1 L11.6 1 L14.6 3.6 L14.6 14.8 L5.2 13.6 Z" fill="#F4F6FA" stroke="#AAB8CC" stroke-width="0.8"/><path d="M6.6 5h3.2M6.6 7h3.2M6.6 9h6M6.6 11h6" stroke="#B9C4D8" stroke-width="0.8"/><rect x="10.4" y="5" width="3" height="2.6" fill="#4B86C8"/></svg>
<svg class="a" style="left:222.3px;top:320.8px;" width="7.4" height="10.2" viewBox="0 0 7.4 10.2"><use href="#tri" width="7.4" height="10.2"/></svg>
<svg class="a" style="left:234px;top:313.5px;" width="21" height="21" viewBox="0 0 21 21"><path d="M0.8 14.2 L9 10.6 L19.4 13.6 L11 18.6 Z" fill="#CDE8F8" stroke="#7FBFE8" stroke-width="0.9"/><path d="M0.8 14.2 L11 18.6 L19.4 13.6 L19.4 14.6 L11 19.6 L0.8 15.2Z" fill="#8CCBF0"/><ellipse cx="9.2" cy="13" rx="3.4" ry="2.7" fill="#2F7FD0"/><path d="M11.6 13 L11.6 1.4 Q15.6 2.8 15.4 8.2 Q14.2 5.2 12.8 5.2 L12.8 13Z" fill="#3C8DDA"/></svg>
<svg class="a" style="left:222.3px;top:347.8px;" width="7.4" height="10.2" viewBox="0 0 7.4 10.2"><use href="#tri" width="7.4" height="10.2"/></svg>
<svg class="a" style="left:234px;top:340.5px;" width="21" height="21" viewBox="0 0 21 21"><path d="M0.8 14.2 L9 10.6 L19.4 13.6 L11 18.6 Z" fill="#CDE8F8" stroke="#7FBFE8" stroke-width="0.9"/><path d="M0.8 14.2 L11 18.6 L19.4 13.6 L19.4 14.6 L11 19.6 L0.8 15.2Z" fill="#8CCBF0"/><path d="M5.4 3 L15 2.2 L15 11.4 L5.4 12.2Z" fill="#F2F6FA" stroke="#A9BED6" stroke-width="0.9"/><path d="M6.6 4.2 L13.8 3.6 L13.8 10.2 L6.6 10.8Z" fill="#8EC3EE"/><path d="M6.6 10.8 L6.6 8.6 L9.4 6.6 L11.4 8.6 L13.8 7.6 L13.8 10.2Z" fill="#4E8A5A"/></svg>
<svg class="a" style="left:222.3px;top:374.8px;" width="7.4" height="10.2" viewBox="0 0 7.4 10.2"><use href="#tri" width="7.4" height="10.2"/></svg>
<svg class="a" style="left:234px;top:367.5px;" width="21" height="21" viewBox="0 0 21 21"><path d="M0.8 14.2 L9 10.6 L19.4 13.6 L11 18.6 Z" fill="#CDE8F8" stroke="#7FBFE8" stroke-width="0.9"/><path d="M0.8 14.2 L11 18.6 L19.4 13.6 L19.4 14.6 L11 19.6 L0.8 15.2Z" fill="#8CCBF0"/><path d="M5.6 1.2 L14.4 0.6 L14.4 15.4 L5.6 14.4Z" fill="#3A3F46" stroke="#23272C" stroke-width="0.6"/><path d="M7.6 2.2 L12.6 1.8 L12.6 7.4 L7.6 7.4Z" fill="#A0683C"/><path d="M7.6 8.4 L12.6 8.4 L12.6 14 L7.6 13.4Z" fill="#2E8FD6"/><path d="M6.5 2.2v11.6M13.5 1.6v12.8" stroke="#DDE3E8" stroke-width="0.9" stroke-dasharray="1.2 1.2"/></svg>
<svg class="a" style="left:210.5px;top:427.5px;" width="9" height="9" viewBox="0 0 9 9"><use href="#triX" width="9" height="9"/></svg>
<svg class="a" style="left:223px;top:422.5px;" width="22" height="19" viewBox="0 0 22 19"><path d="M1.6 4.6 L5.6 3 L7 11.4 L3 13.6 Z" fill="#DDE2E6" stroke="#A9B2BA" stroke-width="0.7"/><rect x="2.6" y="6" width="1.2" height="1.2" fill="#4CB848"/><path d="M6.6 1.2 L19.2 2.6 L17.6 12.8 L8.2 11.4 Z" fill="#E8ECEF" stroke="#A9B2BA" stroke-width="0.8"/><path d="M7.8 2.4 L18 3.6 L16.8 11.6 L9 10.4 Z" fill="#1438C8"/><path d="M7.8 2.4 L12.2 2.9 L13.8 11.1 L9 10.4Z" fill="#2E6AE6"/><path d="M14 3.2 L18 3.6 L16.8 11.6Z" fill="#7FB4F4" opacity="0.85"/><path d="M11 12 L14.6 12.6 L15.2 15 L10 15Z" fill="#C8CED4"/><ellipse cx="12.6" cy="16" rx="5.6" ry="1.9" fill="#DADFE4" stroke="#A9B2BA" stroke-width="0.6"/></svg>
<svg class="a" style="left:222.3px;top:455.8px;" width="7.4" height="10.2" viewBox="0 0 7.4 10.2"><use href="#tri" width="7.4" height="10.2"/></svg>
<svg class="a" style="left:234px;top:456px;" width="21" height="12" viewBox="0 0 21 12"><path d="M0 6.3 L9 1 L19.4 3.2 L10.3 8 Z" fill="#CFCFCF" stroke="#9C9C9C" stroke-width="0.6"/><path d="M3 6.3 L9.2 2.4 L15.5 3.8 L9.6 7.4 Z" fill="#fff" opacity="0.55"/><path d="M0 6.3 L10.3 8 L10.3 10.9 L0 8.7 Z" fill="#E6E6E6" stroke="#9C9C9C" stroke-width="0.5"/><path d="M10.3 8 L19.4 3.2 L19.4 5.7 L10.3 10.9 Z" fill="#A4A4A4"/><path d="M9 7.6 L11.2 8 L11.2 10.6 L9 10.2 Z" fill="#5FA04E"/><path d="M8 2.6 l3 0.7" stroke="#8E8E8E" stroke-width="1.2"/></svg>
<svg class="a" style="left:222.3px;top:482.8px;" width="7.4" height="10.2" viewBox="0 0 7.4 10.2"><use href="#tri" width="7.4" height="10.2"/></svg>
<svg class="a" style="left:234px;top:476px;" width="20" height="20" viewBox="0 0 20 20"><circle cx="9.8" cy="8.6" r="8.2" fill="#DCDCDC" stroke="#A8A8A8" stroke-width="0.8"/><path d="M9.8 8.6 L3 3.6 A8.2 8.2 0 0 1 8 0.6Z" fill="#8FD08A" opacity="0.8"/><path d="M9.8 8.6 L17.6 11 A8.2 8.2 0 0 1 14 15.6Z" fill="#F4F4F4"/><circle cx="9.8" cy="8.6" r="2.6" fill="#F6F6F6" stroke="#B8B8B8" stroke-width="0.7"/><rect x="1.4" y="12.2" width="16.6" height="6.6" rx="1" fill="#3C3C3C"/><text x="9.7" y="17.6" text-anchor="middle" font-family="Liberation Sans, sans-serif" font-weight="bold" font-size="5.6" fill="#fff">DVD-R</text></svg>
<svg class="a" style="left:222.3px;top:509.8px;" width="7.4" height="10.2" viewBox="0 0 7.4 10.2"><use href="#tri" width="7.4" height="10.2"/></svg>
<svg class="a" style="left:233px;top:505px;" width="22" height="19" viewBox="0 0 22 19"><path d="M9.5 11.6 L14.6 8 L21 9.6 L15.4 13.6 Z" fill="#D6D6D6" stroke="#A2A2A2" stroke-width="0.6"/><path d="M9.5 11.6 L15.4 13.6 L15.4 16.2 L9.5 14.2 Z" fill="#E6E6E6"/><path d="M15.4 13.6 L21 9.6 L21 11.8 L15.4 16.2 Z" fill="#A4A4A4"/><rect x="1.8" y="1.6" width="3.7" height="3" fill="#21B6F0"/><rect x="6.1" y="1.6" width="3.7" height="3" fill="#21B6F0"/><rect x="1.8" y="5.1" width="3.7" height="3" fill="#21B6F0"/><rect x="6.1" y="5.1" width="3.7" height="3" fill="#21B6F0"/><rect x="1.5" y="8.8" width="8.8" height="8.8" fill="#E9EEF3" stroke="#6F87A0" stroke-width="0.8"/><path d="M2.6 16.4 L4.2 11.4 L5.8 16.4Z" fill="#3B7C4A"/><path d="M5.8 16.4 L7.6 10.8 L9.4 16.4Z" fill="#2F6FB8"/></svg>
<svg class="a" style="left:222.3px;top:536.8px;" width="7.4" height="10.2" viewBox="0 0 7.4 10.2"><use href="#tri" width="7.4" height="10.2"/></svg>
<svg class="a" style="left:234px;top:537px;" width="21" height="12" viewBox="0 0 21 12"><path d="M0 6.3 L9 1 L19.4 3.2 L10.3 8 Z" fill="#CFCFCF" stroke="#9C9C9C" stroke-width="0.6"/><path d="M3 6.3 L9.2 2.4 L15.5 3.8 L9.6 7.4 Z" fill="#fff" opacity="0.55"/><path d="M0 6.3 L10.3 8 L10.3 10.9 L0 8.7 Z" fill="#E6E6E6" stroke="#9C9C9C" stroke-width="0.5"/><path d="M10.3 8 L19.4 3.2 L19.4 5.7 L10.3 10.9 Z" fill="#A4A4A4"/><path d="M9 7.6 L11.2 8 L11.2 10.6 L9 10.2 Z" fill="#5FA04E"/><path d="M8 2.6 l3 0.7" stroke="#8E8E8E" stroke-width="1.2"/></svg>
<svg class="a" style="left:222.3px;top:563.8px;" width="7.4" height="10.2" viewBox="0 0 7.4 10.2"><use href="#tri" width="7.4" height="10.2"/></svg>
<svg class="a" style="left:234px;top:564px;" width="21" height="12" viewBox="0 0 21 12"><path d="M0 6.3 L9 1 L19.4 3.2 L10.3 8 Z" fill="#8E8E8E" stroke="#9C9C9C" stroke-width="0.6"/><path d="M3 6.3 L9.2 2.4 L15.5 3.8 L9.6 7.4 Z" fill="#fff" opacity="0.3"/><path d="M0 6.3 L10.3 8 L10.3 10.9 L0 8.7 Z" fill="#1E1E1E" stroke="#9C9C9C" stroke-width="0.5"/><path d="M10.3 8 L19.4 3.2 L19.4 5.7 L10.3 10.9 Z" fill="#3A3A3A"/><path d="M8 2.6 l3 0.7" stroke="#8E8E8E" stroke-width="1.2"/></svg>
<div class="a" style="left:400px;top:113px;width:740px;height:31px;background:linear-gradient(#FCFCFD,#F7F8FA);"></div>
<div class="a" style="left:400px;top:144px;width:740px;height:1px;background:#E2E4E8;"></div>
<div class="a" style="left:739px;top:113px;width:1px;height:32px;background:#E2E4E8;"></div>
<div class="a" style="left:889px;top:113px;width:1px;height:32px;background:#E2E4E8;"></div>
<div class="a" style="left:1039px;top:113px;width:1px;height:32px;background:#E2E4E8;"></div>
<div class="a" style="left:1139px;top:113px;width:1px;height:32px;background:#E2E4E8;"></div>
<svg class="a" style="left:571.5px;top:114px;" width="10" height="6" viewBox="0 0 10 6"><path d="M0 5.4 L5 0 L10 5.4 Z" fill="#3F5878"/></svg>
<svg class="a" style="left:423px;top:155.5px;" width="19" height="21" viewBox="0 0 19 21"><use href="#folder" width="19" height="21"/></svg>
<svg class="a" style="left:423px;top:182.5px;" width="19" height="21" viewBox="0 0 19 21"><use href="#folder" width="19" height="21"/></svg>
<svg class="a" style="left:423px;top:209.5px;" width="19" height="21" viewBox="0 0 19 21"><use href="#folder" width="19" height="21"/></svg>
<svg class="a" style="left:423px;top:236.5px;" width="19" height="21" viewBox="0 0 19 21"><use href="#folder" width="19" height="21"/></svg>
<svg class="a" style="left:423px;top:263.5px;" width="19" height="21" viewBox="0 0 19 21"><use href="#folder" width="19" height="21"/></svg>
<svg class="a" style="left:423px;top:290.5px;" width="19" height="21" viewBox="0 0 19 21"><use href="#folder" width="19" height="21"/></svg>
<svg class="a" style="left:423px;top:317.5px;" width="19" height="21" viewBox="0 0 19 21"><use href="#folder" width="19" height="21"/></svg>
<svg class="a" style="left:423px;top:344.5px;" width="19" height="21" viewBox="0 0 19 21"><use href="#folder" width="19" height="21"/></svg>
<svg class="a" style="left:423px;top:371.5px;" width="19" height="21" viewBox="0 0 19 21"><use href="#folder" width="19" height="21"/></svg>
<svg class="a" style="left:423px;top:398.5px;" width="19" height="21" viewBox="0 0 19 21"><use href="#folder" width="19" height="21"/></svg>
<svg class="a" style="left:423px;top:425.5px;" width="19" height="21" viewBox="0 0 19 21"><use href="#folder" width="19" height="21"/></svg>
<svg class="a" style="left:423px;top:452.5px;" width="19" height="21" viewBox="0 0 19 21"><use href="#folder" width="19" height="21"/></svg>
<svg class="a" style="left:423px;top:479.5px;" width="19" height="21" viewBox="0 0 19 21"><use href="#folder" width="19" height="21"/></svg>
<svg class="a" style="left:423px;top:506.50000000000006px;" width="19" height="21" viewBox="0 0 19 21"><use href="#folder" width="19" height="21"/></svg>
<svg class="a" style="left:423px;top:533.5px;" width="19" height="21" viewBox="0 0 19 21"><use href="#folder" width="19" height="21"/></svg>
<svg class="a" style="left:423px;top:560.5px;" width="19" height="21" viewBox="0 0 19 21"><use href="#folder" width="19" height="21"/></svg>
<svg class="a" style="left:423px;top:587.5px;" width="19" height="21" viewBox="0 0 19 21"><use href="#folder" width="19" height="21"/></svg>
<span class="t" style="left:679.1px;top:0.3px;font-size:18.5px;color:#000;transform:scaleX(0.9922);">Policy Templates</span>
<span class="t" style="left:380.4px;top:40.6px;font-size:15px;color:#111;transform:scaleX(0.9900);">Computer</span>
<span class="t" style="left:472.5px;top:40.6px;font-size:15px;color:#111;transform:scaleX(0.9667);">New Volume (E:)</span>
<span class="t" style="left:610.4px;top:40.6px;font-size:15px;color:#111;transform:scaleX(0.9908);">Windows</span>
<span class="t" style="left:697.6px;top:40.6px;font-size:15px;color:#111;transform:scaleX(0.9828);">Inf</span>
<span class="t" style="left:1093.4px;top:40.9px;font-size:15px;color:#6D6D6D;transform:scaleX(0.9592);">Search Inf</span>
<span class="t" style="left:222.1px;top:83.5px;font-size:15px;color:#1E395B;transform:scaleX(0.9741);">Organize</span>
<span class="t" style="left:331.4px;top:83.5px;font-size:15px;color:#1E395B;transform:scaleX(1.0209);">New folder</span>
<span class="t" style="left:248.1px;top:125.6px;font-size:15px;color:#111;transform:scaleX(0.9613);">Favorites</span>
<span class="t" style="left:258.9px;top:152.6px;font-size:15px;color:#111;transform:scaleX(1.0011);">Desktop</span>
<span class="t" style="left:258.9px;top:179.6px;font-size:15px;color:#111;transform:scaleX(0.9990);">Downloads</span>
<span class="t" style="left:258.9px;top:206.6px;font-size:15px;color:#111;transform:scaleX(0.9556);">Recent places</span>
<span class="t" style="left:248.1px;top:260.6px;font-size:15px;color:#111;transform:scaleX(0.9669);">Libraries</span>
<span class="t" style="left:258.9px;top:287.6px;font-size:15px;color:#111;transform:scaleX(0.9975);">Documents</span>
<span class="t" style="left:258.9px;top:314.6px;font-size:15px;color:#111;transform:scaleX(0.9963);">Music</span>
<span class="t" style="left:258.9px;top:341.6px;font-size:15px;color:#111;transform:scaleX(0.9624);">Pictures</span>
<span class="t" style="left:259.9px;top:368.6px;font-size:15px;color:#111;transform:scaleX(0.9859);">Videos</span>
<span class="t" style="left:249.1px;top:422.6px;font-size:15px;color:#111;transform:scaleX(1.0125);">Computer</span>
<span class="t" style="left:259.9px;top:449.6px;font-size:15px;color:#111;transform:scaleX(0.9264);">Acer (C:)</span>
<span class="t" style="left:258.9px;top:476.6px;font-size:15px;color:#111;transform:scaleX(0.9652);">DVD RW Drive (D</span>
<span class="t" style="left:375.4px;top:476.6px;font-size:15px;color:#111;transform:scaleX(0.8515);">:)</span>
<span class="t" style="left:258.9px;top:503.6px;font-size:15px;color:#111;transform:scaleX(0.9722);">New Volume (E:)</span>
<span class="t" style="left:258.9px;top:530.6px;font-size:15px;color:#111;transform:scaleX(0.9771);">New Volume (F:)</span>
<span class="t" style="left:259.9px;top:557.6px;font-size:15px;color:#111;transform:scaleX(0.9554);">Transcend (H:)</span>
<span class="t" style="left:420.6px;top:119.5px;font-size:15px;color:#4C607A;transform:scaleX(0.9696);">Name</span>
<span class="t" style="left:746.8px;top:119.5px;font-size:15px;color:#4C607A;transform:scaleX(1.0307);">Date modified</span>
<span class="t" style="left:897.7px;top:119.5px;font-size:15px;color:#4C607A;transform:scaleX(0.9799);">Type</span>
<span class="t" style="left:1046.8px;top:119.5px;font-size:15px;color:#4C607A;transform:scaleX(0.9022);">Size</span>
<span class="t" style="left:447.7px;top:157.5px;font-size:15px;color:#111;transform:scaleX(0.9110);">.NET CLR Data</span>
<span class="t" style="left:747.6px;top:157.5px;font-size:15px;color:#6D6D6D;transform:scaleX(0.9704);">3/28/2013 12:33 A...</span>
<span class="t" style="left:896.7px;top:157.5px;font-size:15px;color:#6D6D6D;transform:scaleX(0.9990);">File folder</span>
<span class="t" style="left:447.6px;top:184.5px;font-size:15px;color:#111;transform:scaleX(0.9599);">.NET CLR Networking</span>
<span class="t" style="left:747.6px;top:184.5px;font-size:15px;color:#6D6D6D;transform:scaleX(0.9704);">3/28/2013 12:33 A...</span>
<span class="t" style="left:896.7px;top:184.5px;font-size:15px;color:#6D6D6D;transform:scaleX(0.9990);">File folder</span>
<span class="t" style="left:447.6px;top:211.5px;font-size:15px;color:#111;transform:scaleX(0.9516);">.NET CLR Networking 4.0.0.0</span>
<span class="t" style="left:747.6px;top:211.5px;font-size:15px;color:#6D6D6D;transform:scaleX(1.0000);">7/26/2012 3:35 AM</span>
<span class="t" style="left:896.7px;top:211.5px;font-size:15px;color:#6D6D6D;transform:scaleX(0.9990);">File folder</span>
<span class="t" style="left:447.6px;top:238.5px;font-size:15px;color:#111;transform:scaleX(0.9728);">.NET Data Provider for Oracle</span>
<span class="t" style="left:747.6px;top:238.5px;font-size:15px;color:#6D6D6D;transform:scaleX(0.9704);">3/28/2013 12:33 A...</span>
<span class="t" style="left:896.7px;top:238.5px;font-size:15px;color:#6D6D6D;transform:scaleX(0.9990);">File folder</span>
<span class="t" style="left:447.6px;top:265.5px;font-size:15px;color:#111;transform:scaleX(0.9642);">.NET Data Provider for SqlServer</span>
<span class="t" style="left:747.6px;top:265.5px;font-size:15px;color:#6D6D6D;transform:scaleX(0.9704);">3/28/2013 12:33 A...</span>
<span class="t" style="left:896.7px;top:265.5px;font-size:15px;color:#6D6D6D;transform:scaleX(0.9990);">File folder</span>
<span class="t" style="left:447.7px;top:292.5px;font-size:15px;color:#111;transform:scaleX(0.9483);">.NETFramework</span>
<span class="t" style="left:747.6px;top:292.5px;font-size:15px;color:#6D6D6D;transform:scaleX(0.9704);">3/28/2013 12:33 A...</span>
<span class="t" style="left:896.7px;top:292.5px;font-size:15px;color:#6D6D6D;transform:scaleX(0.9990);">File folder</span>
<span class="t" style="left:448.6px;top:319.5px;font-size:15px;color:#111;transform:scaleX(0.9830);">AD RMS Certification</span>
<span class="t" style="left:747.6px;top:319.5px;font-size:15px;color:#6D6D6D;transform:scaleX(0.9786);">5/25/2014 11:38 A...</span>
<span class="t" style="left:896.7px;top:319.5px;font-size:15px;color:#6D6D6D;transform:scaleX(0.9990);">File folder</span>
<span class="t" style="left:448.6px;top:346.5px;font-size:15px;color:#111;transform:scaleX(0.9612);">AD RMS Directory Services</span>
<span class="t" style="left:747.6px;top:346.5px;font-size:15px;color:#6D6D6D;transform:scaleX(0.9786);">5/25/2014 11:38 A...</span>
<span class="t" style="left:896.7px;top:346.5px;font-size:15px;color:#6D6D6D;transform:scaleX(0.9990);">File folder</span>
<span class="t" style="left:448.6px;top:373.5px;font-size:15px;color:#111;transform:scaleX(0.9632);">AD RMS Group Expansion</span>
<span class="t" style="left:747.6px;top:373.5px;font-size:15px;color:#6D6D6D;transform:scaleX(0.9786);">5/25/2014 11:38 A...</span>
<span class="t" style="left:896.7px;top:373.5px;font-size:15px;color:#6D6D6D;transform:scaleX(0.9990);">File folder</span>
<span class="t" style="left:448.6px;top:400.5px;font-size:15px;color:#111;transform:scaleX(0.9573);">AD RMS Licensing</span>
<span class="t" style="left:747.6px;top:400.5px;font-size:15px;color:#6D6D6D;transform:scaleX(0.9786);">5/25/2014 11:38 A...</span>
<span class="t" style="left:896.7px;top:400.5px;font-size:15px;color:#6D6D6D;transform:scaleX(0.9990);">File folder</span>
<span class="t" style="left:448.6px;top:427.5px;font-size:15px;color:#111;transform:scaleX(0.9807);">AD RMS Logging</span>
<span class="t" style="left:747.6px;top:427.5px;font-size:15px;color:#6D6D6D;transform:scaleX(0.9786);">5/25/2014 11:38 A...</span>
<span class="t" style="left:896.7px;top:427.5px;font-size:15px;color:#6D6D6D;transform:scaleX(0.9990);">File folder</span>
<span class="t" style="left:448.6px;top:454.5px;font-size:15px;color:#111;transform:scaleX(0.9528);">AD RMS Service Discovery</span>
<span class="t" style="left:747.6px;top:454.5px;font-size:15px;color:#6D6D6D;transform:scaleX(0.9786);">5/25/2014 11:38 A...</span>
<span class="t" style="left:896.7px;top:454.5px;font-size:15px;color:#6D6D6D;transform:scaleX(0.9990);">File folder</span>
<span class="t" style="left:448.6px;top:481.5px;font-size:15px;color:#111;transform:scaleX(0.9408);">ADWS</span>
<span class="t" style="left:747.6px;top:481.5px;font-size:15px;color:#6D6D6D;transform:scaleX(0.9834);">3/25/2013 8:48 PM</span>
<span class="t" style="left:896.7px;top:481.5px;font-size:15px;color:#6D6D6D;transform:scaleX(0.9990);">File folder</span>
<span class="t" style="left:448.6px;top:508.5px;font-size:15px;color:#111;transform:scaleX(0.8709);">ASP</span>
<span class="t" style="left:746.6px;top:508.5px;font-size:15px;color:#6D6D6D;transform:scaleX(0.9727);">10/20/2013 11:55 ...</span>
<span class="t" style="left:896.7px;top:508.5px;font-size:15px;color:#6D6D6D;transform:scaleX(0.9990);">File folder</span>
<span class="t" style="left:448.6px;top:535.5px;font-size:15px;color:#111;transform:scaleX(0.9025);">ASP.NET</span>
<span class="t" style="left:747.6px;top:535.5px;font-size:15px;color:#6D6D6D;transform:scaleX(0.9834);">4/26/2013 9:44 PM</span>
<span class="t" style="left:896.7px;top:535.5px;font-size:15px;color:#6D6D6D;transform:scaleX(0.9990);">File folder</span>
<span class="t" style="left:448.6px;top:562.5px;font-size:15px;color:#111;transform:scaleX(0.9295);">ASP.NET State</span>
<span class="t" style="left:747.6px;top:562.5px;font-size:15px;color:#6D6D6D;transform:scaleX(0.9834);">4/26/2013 9:44 PM</span>
<span class="t" style="left:896.7px;top:562.5px;font-size:15px;color:#6D6D6D;transform:scaleX(0.9990);">File folder</span>
<span class="t" style="left:448.6px;top:589.5px;font-size:15px;color:#111;transform:scaleX(0.9160);">ASP.NET_4.0.30319</span>
<span class="t" style="left:747.6px;top:589.5px;font-size:15px;color:#6D6D6D;transform:scaleX(0.9834);">4/26/2013 9:44 PM</span>
<span class="t" style="left:896.7px;top:589.5px;font-size:15px;color:#6D6D6D;transform:scaleX(0.9990);">File folder</span></div>
<div class="layer" id="dtop" style="left:0;top:0;width:1343px;height:705px;"><div class="a" style="left:375px;top:113px;width:25px;height:492px;background:#fff;"></div>
<div class="a" style="left:375px;top:113px;width:21px;height:492px;background:#fff;border:1px solid #BDBDBD;box-sizing:border-box;"></div>
<div class="a" style="left:375px;top:133px;width:21px;height:1px;background:#BDBDBD;"></div>
<div class="a" style="left:375px;top:584px;width:21px;height:1px;background:#BDBDBD;"></div>
<div class="a" style="left:375px;top:134px;width:21px;height:403px;background:#DCDCDC;border:1px solid #ADADAD;box-sizing:border-box;"></div>
<svg class="a" style="left:379.5px;top:120px;" width="11" height="8" viewBox="0 0 11 8"><path d="M1 6.6 L5.4 1.6 L9.8 6.6" fill="none" stroke="#555" stroke-width="1.4"/></svg>
<svg class="a" style="left:378.6px;top:589.4px;" width="11" height="8" viewBox="0 0 11 8"><path d="M1 1.4 L5.4 6.4 L9.8 1.4" fill="none" stroke="#555" stroke-width="1.4"/></svg>
<svg class="a" style="left:381px;top:329px;" width="10" height="12" viewBox="0 0 10 12"><path d="M0 1.5h10M0 5.5h10M0 9.5h10" stroke="#606060" stroke-width="1.6"/></svg>
<div class="a" style="left:1276px;top:113px;width:21px;height:492px;background:#fff;border:1px solid #BDBDBD;box-sizing:border-box;"></div>
<div class="a" style="left:1276px;top:133px;width:21px;height:1px;background:#BDBDBD;"></div>
<div class="a" style="left:1276px;top:584px;width:21px;height:1px;background:#BDBDBD;"></div>
<div class="a" style="left:1276px;top:134px;width:21px;height:144px;background:#DCDCDC;border:1px solid #ADADAD;box-sizing:border-box;"></div>
<svg class="a" style="left:1280.5px;top:120px;" width="11" height="8" viewBox="0 0 11 8"><path d="M1 6.6 L5.4 1.6 L9.8 6.6" fill="none" stroke="#555" stroke-width="1.4"/></svg>
<svg class="a" style="left:1279.6px;top:589.4px;" width="11" height="8" viewBox="0 0 11 8"><path d="M1 1.4 L5.4 6.4 L9.8 1.4" fill="none" stroke="#555" stroke-width="1.4"/></svg>
<svg class="a" style="left:1282px;top:200px;" width="10" height="12" viewBox="0 0 10 12"><path d="M0 1.5h10M0 5.5h10M0 9.5h10" stroke="#606060" stroke-width="1.6"/></svg>
<div class="a" style="left:200px;top:605px;width:1097px;height:97px;background:#F0F0F0;"></div>
<div class="a" style="left:200px;top:605px;width:1px;height:97px;background:#E9F8FF;"></div>
<div class="a" style="left:200px;top:701px;width:1097px;height:1px;background:#E9F8FF;"></div>
<div class="a" style="left:421px;top:618px;width:632px;height:29px;background:#fff;border:1px solid #3F6E96;box-sizing:border-box;"></div>
<div class="a" style="left:425.5px;top:622px;width:1px;height:20px;background:#000;"></div>
<svg class="a" style="left:1037.5px;top:628px;" width="11" height="9" viewBox="0 0 11 9"><path d="M1 1.5 L5.5 6.6 L10 1.5" fill="none" stroke="#444" stroke-width="1.8"/></svg>
<div class="a" style="left:1065px;top:618px;width:212px;height:28px;background:#fff;border:1px solid #707070;box-sizing:border-box;"></div>
<svg class="a" style="left:1261.5px;top:628px;" width="11" height="9" viewBox="0 0 11 9"><path d="M1 1.5 L5.5 6.6 L10 1.5" fill="none" stroke="#444" stroke-width="1.8"/></svg>
<div class="a" style="left:1066px;top:653px;width:98px;height:33px;background:#E1E1E1;border:1px solid #3C88CF;box-sizing:border-box;"></div>
<div class="a" style="left:1178px;top:653px;width:98px;height:33px;background:#E1E1E1;border:1px solid #8A8A8A;box-sizing:border-box;"></div>
<svg class="a" style="left:1284px;top:689px;" width="14" height="13" viewBox="0 0 14 13"><rect x="11" y="1" width="2" height="2" fill="#fff"/><rect x="10" y="0" width="2" height="2" fill="#A8A8A8"/><rect x="7" y="5" width="2" height="2" fill="#fff"/><rect x="6" y="4" width="2" height="2" fill="#A8A8A8"/><rect x="11" y="5" width="2" height="2" fill="#fff"/><rect x="10" y="4" width="2" height="2" fill="#A8A8A8"/><rect x="3" y="9" width="2" height="2" fill="#fff"/><rect x="2" y="8" width="2" height="2" fill="#A8A8A8"/><rect x="7" y="9" width="2" height="2" fill="#fff"/><rect x="6" y="8" width="2" height="2" fill="#A8A8A8"/><rect x="11" y="9" width="2" height="2" fill="#fff"/><rect x="10" y="8" width="2" height="2" fill="#A8A8A8"/></svg>
<span class="t" style="left:347.0px;top:622.3px;font-size:15px;color:#111;transform:scaleX(0.9539);">File name:</span>
<span class="t" style="left:1068.4px;top:622.8px;font-size:15px;color:#111;transform:scaleX(0.9939);">Policy Templates</span>
<span class="t" style="left:1097.0px;top:659.2px;font-size:15px;color:#111;transform:scaleX(0.9808);">Open</span>
<span class="t" style="left:1205.0px;top:659.2px;font-size:15px;color:#111;transform:scaleX(0.9357);">Cancel</span></div>

</body></html>
